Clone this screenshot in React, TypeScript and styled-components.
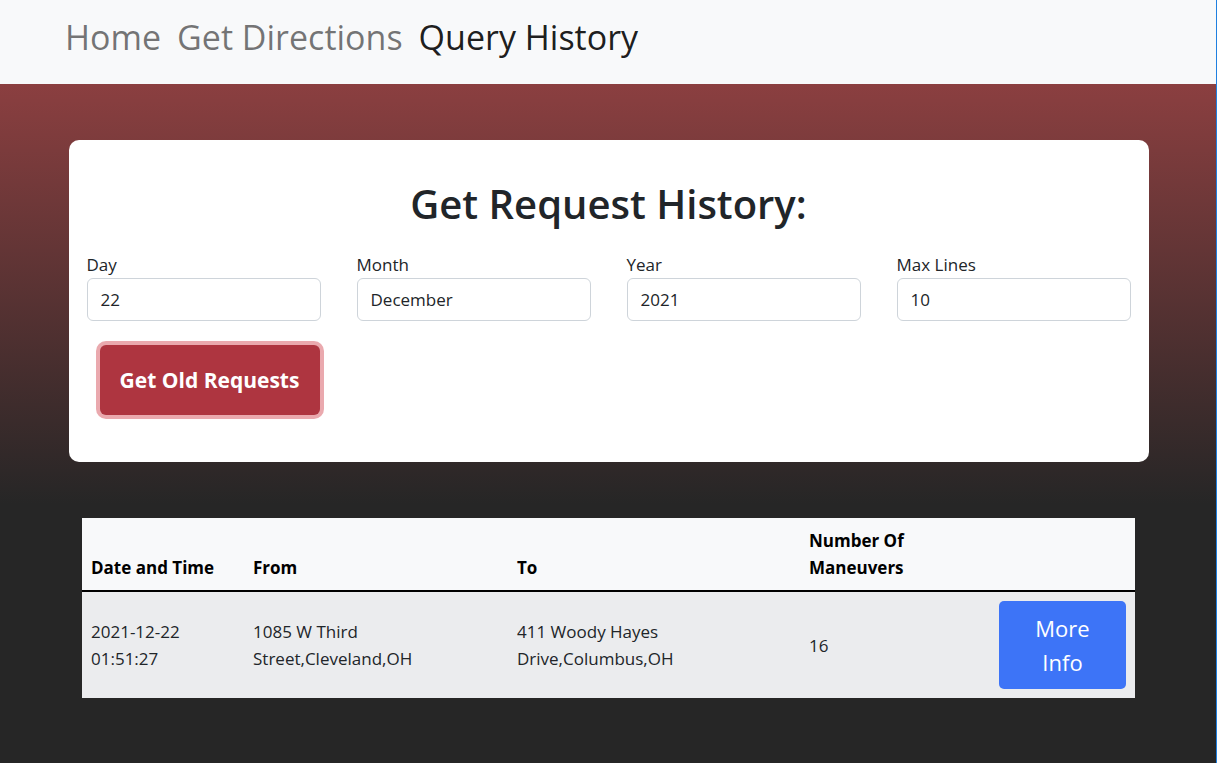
import React from "react";
import styled, { createGlobalStyle } from "styled-components";

const Global = createGlobalStyle`
  html, body { margin: 0; padding: 0; }
  body {
    font-family: "Open Sans", "Noto Sans", sans-serif;
    background: #262626;
    color: #212529;
    overflow: hidden;
  }
  * { box-sizing: border-box; }
`;

const Page = styled.div`
  width: 1217px;
  height: 763px;
  background: #262626;
  display: flex;
  flex-direction: column;
  position: relative;
  &::after {
    content: "";
    position: absolute;
    top: 0;
    right: 0;
    width: 1px;
    height: 100%;
    background: #1f80e0;
  }
`;

const NavBar = styled.nav`
  height: 84px;
  flex: none;
  background: #f8f9fa;
  display: flex;
  align-items: center;
  padding-left: 57px;
  padding-bottom: 10px;
`;

const NavLink = styled.a<{ $active?: boolean }>`
  font-size: 34px;
  line-height: 1.5;
  padding: 0 8px;
  text-decoration: none;
  color: ${(p) => (p.$active ? "rgba(0,0,0,0.9)" : "rgba(0,0,0,0.55)")};
  cursor: pointer;
`;

const Main = styled.main`
  flex: 1;
  background: linear-gradient(180deg, #8b3f40 0px, #262626 420px, #262626 100%);
  display: flex;
  flex-direction: column;
  align-items: center;
  padding-top: 56px;
`;

const Card = styled.section`
  width: 1080px;
  background: #ffffff;
  border-radius: 10px;
  padding: 40px 18px 47px;
`;

const Title = styled.h1`
  margin: 0 0 23px;
  text-align: center;
  font-size: 40px;
  font-weight: 600;
  line-height: 1.2;
  color: #212529;
`;

const FieldGrid = styled.div`
  display: grid;
  grid-template-columns: repeat(4, 234px);
  column-gap: 36px;
`;

const Field = styled.label`
  display: flex;
  flex-direction: column;
`;

const LabelText = styled.span`
  font-size: 17px;
  line-height: 27px;
  color: #212529;
`;

const Input = styled.input`
  height: 43px;
  border: 1px solid #ced4da;
  border-radius: 6px;
  padding: 0 13px;
  font-family: inherit;
  font-size: 17px;
  color: #212529;
  background: #fff;
  outline: none;
`;

const ButtonRow = styled.div`
  padding: 24px 0 0 13px;
`;

const DangerButton = styled.button`
  width: 220px;
  height: 70px;
  border: none;
  border-radius: 6px;
  background: #ae3540;
  color: #fff;
  font-family: inherit;
  font-weight: 700;
  font-size: 21px;
  box-shadow: 0 0 0 4px #eaa9ae;
  cursor: pointer;
`;

const TableWrap = styled.div`
  margin-top: 56px;
  width: 1053px;
`;

const Table = styled.table`
  width: 100%;
  border-collapse: collapse;
  font-size: 17px;
  line-height: 27px;
  color: #000;
`;

const Th = styled.th<{ $w: number }>`
  width: ${(p) => p.$w}px;
  background: #f8f9fa;
  text-align: left;
  vertical-align: bottom;
  padding: 9px;
  font-weight: 700;
  border-bottom: 2px solid #000;
`;

const Td = styled.td`
  background: #ebecee;
  padding: 9px;
  vertical-align: middle;
  color: #212529;
`;

const InfoButton = styled.button`
  width: 127px;
  height: 88px;
  border: none;
  border-radius: 5px;
  background: #3d74f7;
  color: #fff;
  font-family: inherit;
  font-size: 22px;
  line-height: 34px;
  padding: 0 24px;
  cursor: pointer;
`;

const fields = [
  { label: "Day", value: "22" },
  { label: "Month", value: "December" },
  { label: "Year", value: "2021" },
  { label: "Max Lines", value: "10" },
];

export default function App() {
  return (
    <>
      <Global />
      <Page>
        <NavBar>
          <NavLink>Home</NavLink>
          <NavLink>Get Directions</NavLink>
          <NavLink $active>Query History</NavLink>
        </NavBar>
        <Main>
          <Card>
            <Title>Get Request History:</Title>
            <FieldGrid>
              {fields.map((f) => (
                <Field key={f.label}>
                  <LabelText>{f.label}</LabelText>
                  <Input defaultValue={f.value} />
                </Field>
              ))}
            </FieldGrid>
            <ButtonRow>
              <DangerButton>Get Old Requests</DangerButton>
            </ButtonRow>
          </Card>
          <TableWrap>
            <Table>
              <thead>
                <tr>
                  <Th $w={162}>Date and Time</Th>
                  <Th $w={264}>From</Th>
                  <Th $w={292}>To</Th>
                  <Th $w={190}>Number Of Maneuvers</Th>
                  <Th $w={145}></Th>
                </tr>
              </thead>
              <tbody>
                <tr>
                  <Td>2021-12-22 01:51:27</Td>
                  <Td>1085 W Third Street,Cleveland,OH</Td>
                  <Td>411 Woody Hayes Drive,Columbus,OH</Td>
                  <Td>16</Td>
                  <Td>
                    <InfoButton>More Info</InfoButton>
                  </Td>
                </tr>
              </tbody>
            </Table>
          </TableWrap>
        </Main>
      </Page>
    </>
  );
}
